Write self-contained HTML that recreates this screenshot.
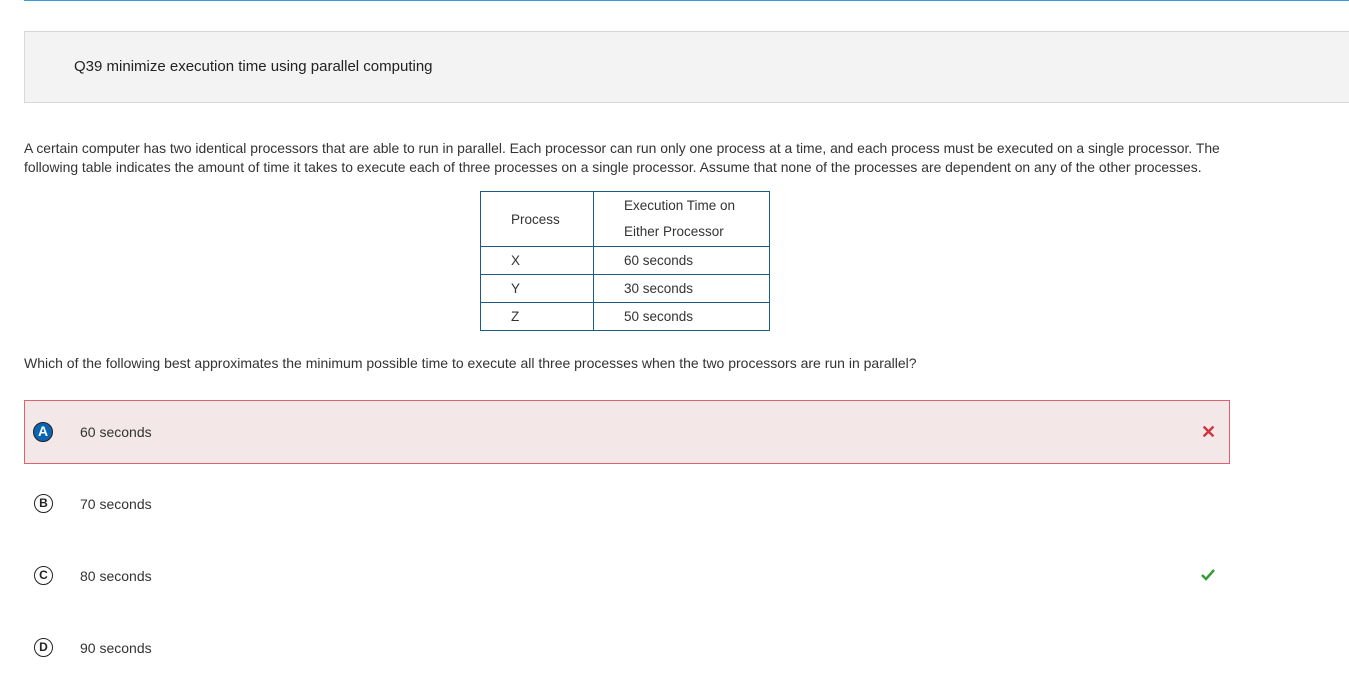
<!DOCTYPE html>
<html><head><meta charset="utf-8"><style>
body{margin:0;width:1349px;height:684px;overflow:hidden;background:#fff;font-family:"Liberation Sans",Arial,sans-serif;color:#333;font-size:14px;position:relative}
.a{position:absolute}
.topline{left:24px;top:0;width:1325px;height:1px;background:#3a9ad9}
.hdr{left:24px;top:31px;width:1330px;height:70px;background:#f3f3f3;border:1px solid #d8d8d8;border-right:none}
.hdr span{position:absolute;left:49px;top:26px;font-size:15px;color:#222}
.p{left:24px;top:139px;width:1215px;line-height:19px;font-size:13.9px}
table{position:absolute;left:480px;top:191px;border-collapse:collapse;font-size:13.5px}
td{border:1px solid #1c5b82;padding:0 0 0 30px;height:27px}
.q{left:24px;top:355px}
.opt{left:24px;width:1206px;height:64px}
.sel{top:400px;background:#f3e7e7;border:1px solid #e06070;box-sizing:border-box}
.c{position:absolute;left:34px;width:19px;height:19px;border-radius:50%;border:1.5px solid #222;box-sizing:border-box;font-weight:bold;font-size:12px;text-align:center;line-height:16px;color:#222}
.c.on{background:#0b64b0;color:#fff;border:1.5px solid #222;width:20px;height:20px;left:8px;font-size:14px;line-height:17px}
.t{position:absolute;left:55px}
</style></head><body>
<div class="a topline"></div>
<div class="a hdr"><span>Q39 minimize execution time using parallel computing</span></div>
<div class="a p">A certain computer has two identical processors that are able to run in parallel. Each processor can run only one process at a time, and each process must be executed on a single processor. The following table indicates the amount of time it takes to execute each of three processes on a single processor. Assume that none of the processes are dependent on any of the other processes.</div>
<table>
<tr><td style="width:82px;height:54px">Process</td><td style="width:145px;line-height:26px">Execution Time on<br>Either Processor</td></tr>
<tr><td>X</td><td>60 seconds</td></tr>
<tr><td>Y</td><td>30 seconds</td></tr>
<tr><td>Z</td><td>50 seconds</td></tr>
</table>
<div class="a q">Which of the following best approximates the minimum possible time to execute all three processes when the two processors are run in parallel?</div>
<div class="a opt sel"><div class="c on" style="top:21px">A</div><div class="t" style="top:23px">60 seconds</div><div style="position:absolute;left:1176px;top:21px;color:#d0343c;font-size:18px;font-weight:bold">✕</div></div>
<div class="c" style="top:494px">B</div><div class="a" style="left:80px;top:496px">70 seconds</div>
<div class="c" style="top:566px">C</div><div class="a" style="left:80px;top:568px">80 seconds</div>
<svg class="a" style="left:1200px;top:568px" width="16" height="14"><path d="M2 7l4 4 8-9" stroke="#3a9a3a" stroke-width="2.5" fill="none"/></svg>
<div class="c" style="top:638px">D</div><div class="a" style="left:80px;top:640px">90 seconds</div>
</body></html>
